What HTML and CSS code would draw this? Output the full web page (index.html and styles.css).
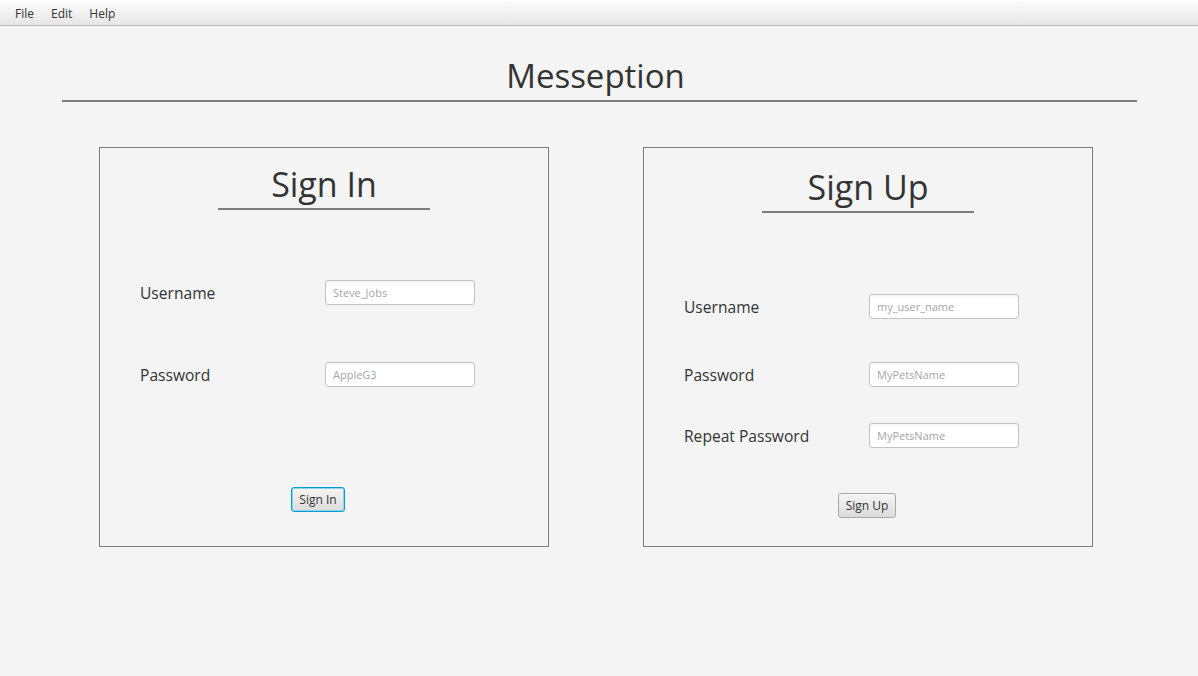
FILE: index.html
```html
<!DOCTYPE html>
<html>
<head>
<meta charset="utf-8">
<link rel="stylesheet" href="styles.css">
</head>
<body>
<div class="menubar">
  <span class="menu-item">File</span>
  <span class="menu-item">Edit</span>
  <span class="menu-item">Help</span>
</div>
<h1 class="app-title">Messeption</h1>
<div class="panels">
  <section class="panel panel-signin">
    <h2 class="panel-title">Sign In</h2>
    <div class="form-row row-first">
      <span class="label">Username</span>
      <input class="field" type="text" placeholder="Steve_Jobs">
    </div>
    <div class="form-row row-second">
      <span class="label">Password</span>
      <input class="field" type="password" placeholder="AppleG3">
    </div>
    <div class="button-row">
      <button class="btn btn-focused">Sign In</button>
    </div>
  </section>
  <section class="panel panel-signup">
    <h2 class="panel-title">Sign Up</h2>
    <div class="form-row row-first">
      <span class="label">Username</span>
      <input class="field" type="text" placeholder="my_user_name">
    </div>
    <div class="form-row row-second">
      <span class="label">Password</span>
      <input class="field" type="password" placeholder="MyPetsName">
    </div>
    <div class="form-row row-third">
      <span class="label">Repeat Password</span>
      <input class="field" type="password" placeholder="MyPetsName">
    </div>
    <div class="button-row">
      <button class="btn">Sign Up</button>
    </div>
  </section>
</div>
</body>
</html>
```

FILE: styles.css
```css
* { box-sizing: border-box; }
html, body {
  margin: 0;
  padding: 0;
  background: #f4f4f4;
  font-family: "Open Sans", "Noto Sans", sans-serif;
  color: #333333;
}
body { width: 1198px; height: 676px; overflow: hidden; }

.menubar {
  height: 26px;
  display: flex;
  align-items: center;
  padding: 3px 0 0 8px;
  background: linear-gradient(#fdfdfd, #e6e6e6);
  border-bottom: 1px solid #b5b5b5;
}
.menu-item {
  font-size: 12px;
  padding: 0 7px 0 7px;
  margin-right: 3px;
  color: #333;
  line-height: 16px;
}

.app-title {
  margin: 26px 61px 0 62px;
  padding-right: 8px;
  height: 50px;
  line-height: 48px;
  text-align: center;
  font-weight: normal;
  font-size: 33px;
  color: #333;
  border-bottom: 2px solid #7d7d7d;
}

.panels {
  display: flex;
  gap: 94px;
  padding-left: 99px;
  margin-top: 45px;
}
.panel {
  width: 450px;
  height: 400px;
  border: 1px solid #7d7d7d;
  display: flex;
  flex-direction: column;
}
.panel-title {
  margin: 12px auto 0;
  width: 212px;
  height: 50px;
  line-height: 48px;
  text-align: center;
  font-weight: normal;
  font-size: 34px;
  color: #333;
  border-bottom: 2px solid #7d7d7d;
}
.panel-signup .panel-title { margin-top: 15px; }

.form-row {
  display: flex;
  align-items: center;
  height: 25px;
  padding-left: 40px;
}
.label {
  width: 185px;
  font-size: 15.6px;
  color: #333;
}
.field {
  width: 150px;
  height: 25px;
  border: 1px solid #c4c4c4;
  border-radius: 3px;
  background: linear-gradient(#f4f4f4 0, #ffffff 3px);
  font-family: inherit;
  font-size: 11px;
  padding: 0 7px;
  outline: none;
}
.field::placeholder { color: #a6a6a6; }

.panel-signin .row-first { margin-top: 70px; }
.panel-signin .row-second { margin-top: 57px; }
.panel-signin .button-row { margin-top: 100px; padding-right: 12px; }

.panel-signup .row-first { margin-top: 81px; }
.panel-signup .row-second { margin-top: 43px; }
.panel-signup .row-third { margin-top: 36px; }
.panel-signup .button-row { margin-top: 45px; padding-right: 2px; }

.button-row {
  display: flex;
  justify-content: center;
}
.btn {
  height: 25px;
  padding: 0 7px;
  font-family: inherit;
  font-size: 12px;
  color: #333;
  border: 1px solid #a8a8a8;
  border-radius: 3px;
  background: linear-gradient(#f5f5f5, #dcdcdc);
  line-height: 21px;
}
.btn-focused {
  border: 1px solid #039ed3;
  box-shadow: inset 0 0 0 1px #8fd0ea;
}
```
